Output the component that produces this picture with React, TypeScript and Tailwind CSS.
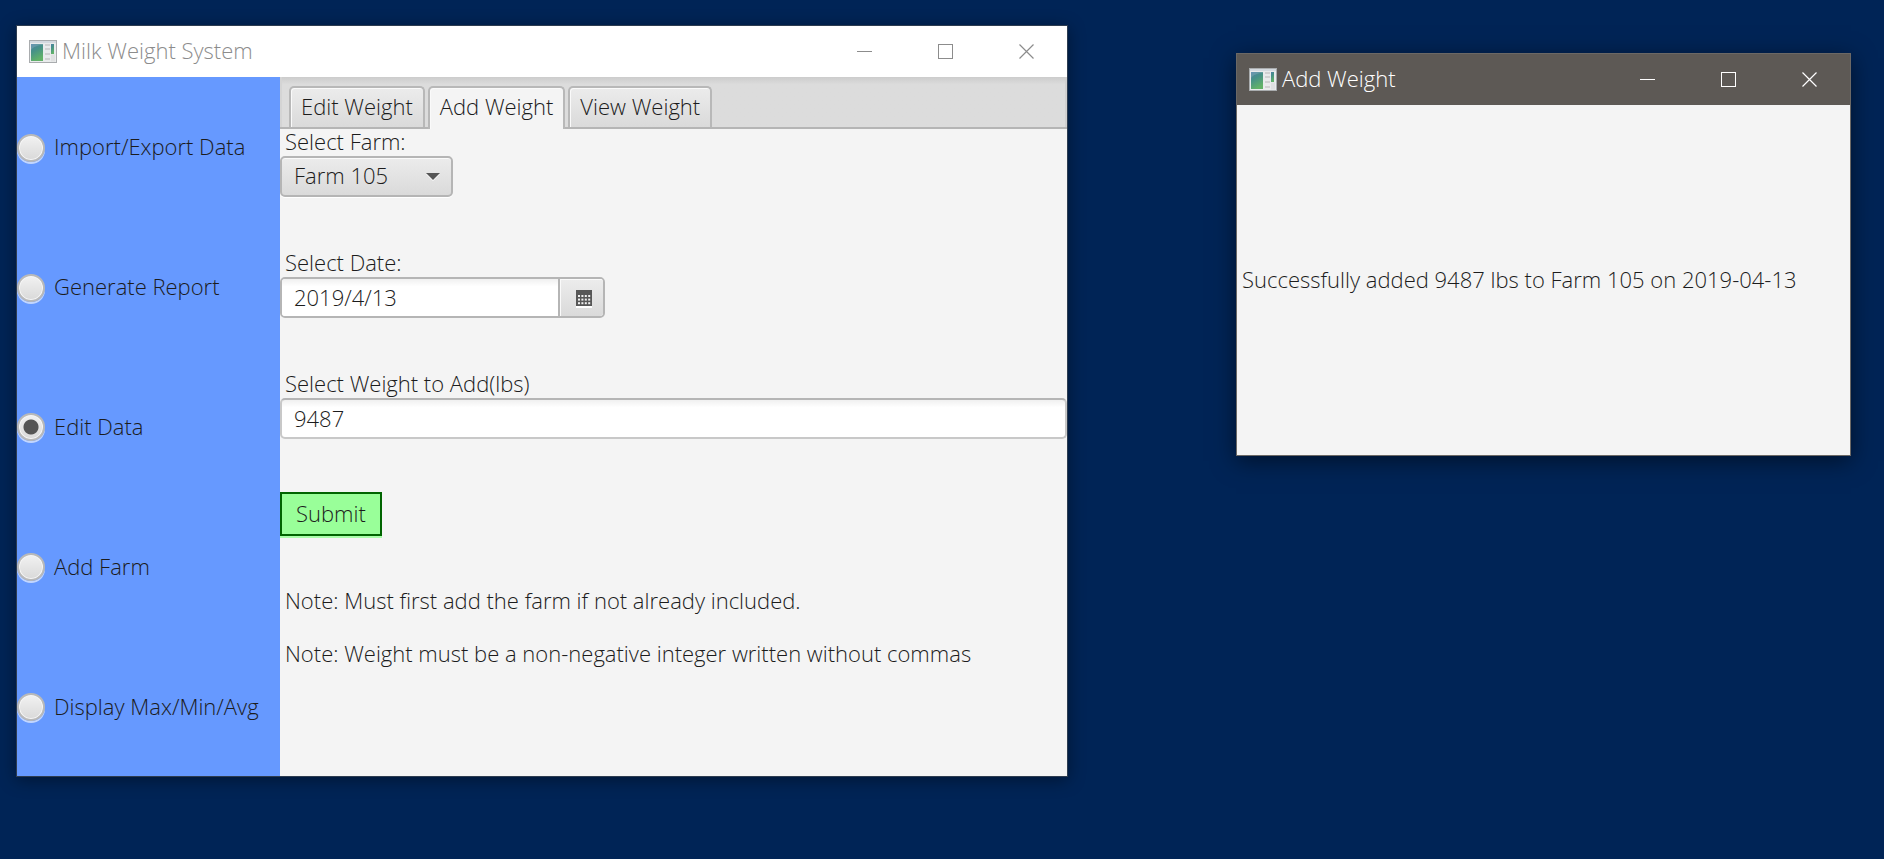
import { useState } from "react";

const tabs = ["Edit Weight", "Add Weight", "View Weight"];
const sections = ["Import/Export Data", "Generate Report", "Edit Data", "Add Farm", "Display Max/Min/Avg"];

function AppIcon({ id }: { id: string }) {
  return (
    <svg width="28" height="23" viewBox="0 0 28 23" aria-hidden="true">
      <defs>
        <linearGradient id={id} x1="0" y1="0" x2="0.4" y2="1">
          <stop offset="0" stopColor="#4c7fa6" />
          <stop offset="0.45" stopColor="#479287" />
          <stop offset="1" stopColor="#62b268" />
        </linearGradient>
      </defs>
      <rect x="0.5" y="0.5" width="27" height="22" fill="#e9ebec" stroke="#a9acae" />
      <rect x="1" y="1" width="26" height="2" fill="#d3d9df" />
      <rect x="2" y="4" width="12" height="17" fill={`url(#${id})`} />
      <path d="M2 4h12v1C9 5 4 7 2 10z" fill="#fff" opacity="0.15" />
      <path d="M16 5h5M16 9h5M16 14h5M16 19h5" stroke="#d0d1d2" strokeWidth="2" />
      <rect x="22" y="4" width="3" height="10" fill={`url(#${id})`} />
      <path d="M22 18h4" stroke="#dfe0e1" strokeWidth="7" />
    </svg>
  );
}

function WindowButtons() {
  const button = "flex w-[81px] items-center justify-center";
  return (
    <div className="flex self-stretch">
      <button className={button} aria-label="Minimize">
        <svg width="15" height="15" viewBox="0 0 15 15" stroke="currentColor">
          <path d="M0 7.5h15" />
        </svg>
      </button>
      <button className={button} aria-label="Maximize">
        <svg width="15" height="15" viewBox="0 0 15 15" fill="none" stroke="currentColor">
          <rect x="0.5" y="0.5" width="14" height="14" />
        </svg>
      </button>
      <button className={button} aria-label="Close">
        <svg width="15" height="15" viewBox="0 0 15 15" stroke="currentColor" strokeWidth="1.2">
          <path d="M0.5 0.5l14 14M14.5 0.5l-14 14" />
        </svg>
      </button>
    </div>
  );
}

function CalendarIcon() {
  const dots = [0, 1, 2].flatMap((row) => [0, 1, 2, 3].map((col) => [2 + col * 3.4, 5 + row * 3.6]));
  return (
    <svg width="16" height="18" viewBox="0 0 16 18" aria-hidden="true">
      <rect y="16" width="16" height="2" fill="#fff" />
      <rect width="16" height="16" fill="#575757" />
      {dots.map(([x, y]) => (
        <rect key={`${x}-${y}`} x={x} y={y} width="2" height="2" fill="#f0f0f0" />
      ))}
    </svg>
  );
}

export default function App() {
  const [section, setSection] = useState("Edit Data");
  const [tab, setTab] = useState("Add Weight");
  const [date, setDate] = useState("2019/4/13");
  const [weight, setWeight] = useState("9487");

  return (
    <div className="relative min-h-screen overflow-hidden bg-[#002456] font-['Open_Sans',sans-serif] text-[22px] leading-[25px] font-light text-[#1c1c1c]">
      <section className="absolute top-[25px] left-4 w-[1052px] border border-[#2d3c50] bg-[#f4f4f4] shadow-[0_3px_16px_rgba(0,0,0,0.4)]">
        <header className="flex h-[51px] items-center gap-[5px] bg-white pl-3 text-[#8c8c8c]">
          <AppIcon id="main-icon" />
          <h1 className="flex-1 pb-0.5">Milk Weight System</h1>
          <WindowButtons />
        </header>
        <div className="flex">
          <nav className="flex w-[263px] shrink-0 flex-col bg-[#6699ff]">
            {sections.map((name) => (
              <label key={name} className="flex flex-1 items-center gap-[9px] whitespace-nowrap">
                <input
                  type="radio"
                  name="section"
                  checked={section === name}
                  onChange={() => setSection(name)}
                  className="mt-0.5 size-7 shrink-0 appearance-none rounded-full border-2 border-[#b9b9b9] bg-linear-to-b from-[#f2f2f2] to-[#d9d9d9] shadow-[inset_0_0_0_1px_#f6f6f6,0_2px_0_rgba(255,255,255,0.6)] checked:bg-[radial-gradient(circle,#555_0_7px,transparent_8px),linear-gradient(#f2f2f2,#dadada)]"
                />
                {name}
              </label>
            ))}
          </nav>
          <main className="flex min-w-0 flex-1 flex-col items-start pb-[108px]">
            <div role="tablist" className="flex h-[52px] w-full items-end gap-[3px] border-b-2 border-[#b5b5b5] bg-linear-to-b from-[#cccccc] via-[#dcdcdc] via-15% to-[#dcdcdc] pl-[9px] shadow-[inset_2px_0_0_#d4d4d4,inset_-2px_0_0_#d0d0d0]">
              {tabs.map((name) => (
                <button
                  key={name}
                  role="tab"
                  aria-selected={tab === name}
                  onClick={() => setTab(name)}
                  className="h-[41px] rounded-t-[5px] border-2 border-b-0 border-[#b8b8b8] bg-linear-to-b from-[#ececec] to-[#dadada] px-2.5 pb-0.5 whitespace-nowrap shadow-[inset_1px_1px_0_#fafafa] aria-selected:-mb-0.5 aria-selected:h-[43px] aria-selected:bg-[#f4f4f4] aria-selected:bg-none aria-selected:pb-1"
                >
                  {name}
                </button>
              ))}
            </div>

            <label htmlFor="farm" className="mb-0.5 px-[5px]">Select Farm:</label>
            <div className="relative mb-[53px]">
              <select
                id="farm"
                defaultValue="Farm 105"
                className="h-[41px] w-[173px] appearance-none rounded-[5px] border-2 border-[#b5b5b5] bg-linear-to-b from-[#ececec] to-[#dadada] px-3 pb-0.5 shadow-[inset_0_1px_0_#fafafa,0_1px_0_#fff]"
              >
                <option>Farm 105</option>
              </select>
              <svg width="14" height="8" viewBox="0 0 14 8" className="pointer-events-none absolute top-[17px] right-[13px]" aria-hidden="true">
                <path d="M0 1h14L7 8z" fill="#fff" />
                <path d="M0 0h14L7 7z" fill="#555" />
              </svg>
            </div>

            <label htmlFor="date" className="mb-0.5 px-[5px]">Select Date:</label>
            <div className="mb-[53px] flex h-[41px] w-[325px] overflow-hidden rounded-[5px] border-2 border-[#b5b5b5] bg-white">
              <input
                id="date"
                value={date}
                onChange={(e) => setDate(e.target.value)}
                className="min-w-0 flex-1 bg-linear-to-b from-[#f0f0f0] to-white to-20% px-3 outline-none"
              />
              <button
                aria-label="Open calendar"
                className="flex w-[45px] items-center justify-center border-l-2 border-[#b5b5b5] bg-linear-to-b from-[#ececec] to-[#dadada] pt-0.5 pl-1 shadow-[inset_1px_1px_0_#fafafa]"
              >
                <CalendarIcon />
              </button>
            </div>

            <label htmlFor="weight" className="mb-0.5 px-[5px]">Select Weight to Add(lbs)</label>
            <input
              id="weight"
              value={weight}
              onChange={(e) => setWeight(e.target.value)}
              className="mb-[53px] h-[41px] w-full rounded-[5px] border-2 border-[#c8c8c8] border-t-[#b5b5b5] bg-white bg-linear-to-b from-[#f0f0f0] to-white to-20% px-3 pb-0.5 outline-none"
            />

            <button className="mb-[52px] h-11 border-2 border-[#006400] bg-[#99ff99] px-3.5 pb-0.5 shadow-[0_2px_0_#aaffaa]">Submit</button>

            <p className="mb-7 px-[5px]">Note: Must first add the farm if not already included.</p>
            <p className="mb-0.5 px-[5px]">Note: Weight must be a non-negative integer written without commas</p>
          </main>
        </div>
      </section>

      <section role="dialog" aria-labelledby="dialog-title" className="absolute top-[53px] left-[1236px] w-[615px] border border-[#6b6865] bg-[#f4f4f4] shadow-[0_5px_22px_rgba(0,0,0,0.5)]">
        <header className="flex h-[51px] items-center gap-[5px] bg-[#5d5955] pl-3 text-white">
          <AppIcon id="dialog-icon" />
          <h2 id="dialog-title" className="flex-1 pb-0.5">Add Weight</h2>
          <WindowButtons />
        </header>
        <p className="flex h-[350px] items-center px-[5px] pb-0.5">Successfully added 9487 lbs to Farm 105 on 2019-04-13</p>
      </section>
    </div>
  );
}
